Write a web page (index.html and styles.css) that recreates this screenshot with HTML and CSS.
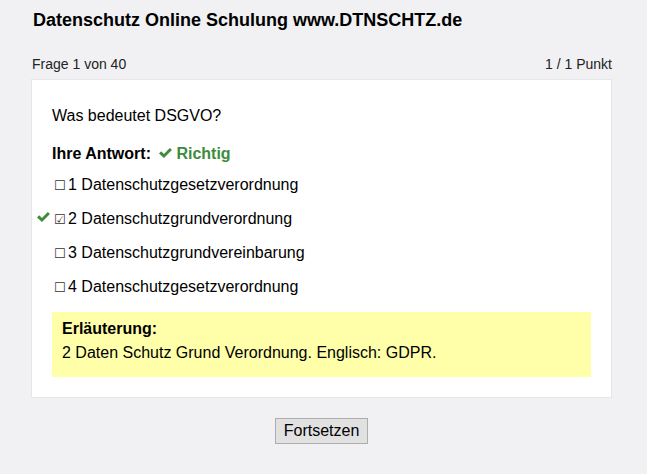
FILE: index.html
```html
<!DOCTYPE html>
<html lang="de">
<head>
    <meta charset="UTF-8">
    <title>Datenschutz Online Schulung</title>
    <link rel="stylesheet" href="styles.css">
</head>
<body>
    <div class="page">
        <h1>Datenschutz Online Schulung www.DTNSCHTZ.de</h1>
        <div class="meta">
            <span>Frage 1 von 40</span>
            <span>1 / 1 Punkt</span>
        </div>
        <div class="card">
            <p class="question">Was bedeutet DSGVO?</p>
            <p class="result">Ihre Antwort:
                <span class="ok">
                    <svg class="check" viewBox="0 0 16 13"><path d="M1 7l2.3-2.3 3 3L12.7 1 15 3.3 6.3 12z"/></svg>Richtig
                </span>
            </p>
            <ul class="options">
                <li><span class="box">☐</span>1 Datenschutzgesetzverordnung</li>
                <li><svg class="check mark" viewBox="0 0 16 13"><path d="M1 7l2.3-2.3 3 3L12.7 1 15 3.3 6.3 12z"/></svg><span class="box">☑</span>2 Datenschutzgrundverordnung</li>
                <li><span class="box">☐</span>3 Datenschutzgrundvereinbarung</li>
                <li><span class="box">☐</span>4 Datenschutzgesetzverordnung</li>
            </ul>
            <div class="note">
                <strong>Erläuterung:</strong><br>
                2 Daten Schutz Grund Verordnung. Englisch: GDPR.
            </div>
        </div>
        <div class="actions">
            <button>Fortsetzen</button>
        </div>
    </div>
</body>
</html>
```

FILE: styles.css
```css
body {
    margin: 0;
    background-color: #f1f1f3;
    font-family: "Liberation Sans", Arial, sans-serif;
    color: #000;
}

.page {
    width: 581px;
    padding: 10px 0 0 31px;
}

h1 {
    margin: 0 0 0 2px;
    font-size: 18px;
    line-height: 21px;
}

.meta {
    display: flex;
    justify-content: space-between;
    margin: 26px 0 0 1px;
    font-size: 14px;
    line-height: 14px;
    color: #222;
}

.card {
    margin-top: 8px;
    background-color: #fff;
    border: 1px solid #e6e6e8;
    padding: 27px 20px 20px 20px;
}

.question {
    margin: 0;
    font-size: 16px;
    line-height: 18px;
}

.result {
    margin: 20px 0 0 0;
    font-size: 16px;
    font-weight: bold;
    line-height: 18px;
}

.ok {
    color: #3d8b3d;
    margin-left: 3px;
}

.check {
    width: 15px;
    height: 12px;
    fill: #3d8b3d;
    margin-right: 3px;
}

.options {
    list-style: none;
    margin: 13px 0 0 0;
    padding: 0;
}

.options li {
    position: relative;
    height: 18px;
    font-size: 16px;
    line-height: 18px;
    margin-bottom: 16px;
}

.mark {
    position: absolute;
    left: -16px;
    top: 1px;
}

.box {
    display: inline-block;
    width: 14px;
    margin-left: 2px;
    font-family: "DejaVu Sans", sans-serif;
    font-size: 13px;
    line-height: 1;
    color: #333;
}

.note {
    margin-top: 6px;
    background-color: #ffffaa;
    padding: 5px 10px 12px 10px;
    font-size: 16px;
    line-height: 24px;
}

.actions {
    text-align: center;
    padding-top: 20px;
}

button {
    font-family: "Liberation Sans", Arial, sans-serif;
    font-size: 16px;
    padding: 3px 8px;
    background-color: #e1e1e1;
    border: 1px solid #adadad;
    color: #000;
}
```
